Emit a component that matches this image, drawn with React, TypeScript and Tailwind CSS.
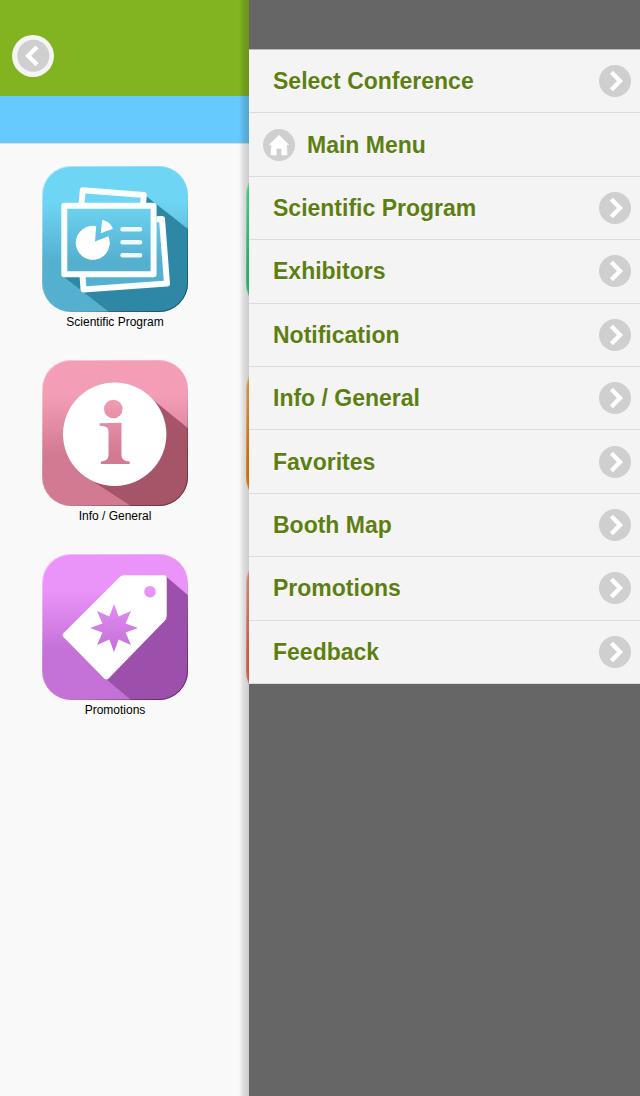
import type { ReactNode } from 'react'

interface MenuItem {
    label: string
    home?: boolean
}

const menuItems: MenuItem[] = [
    { label: 'Select Conference' },
    { label: 'Main Menu', home: true },
    { label: 'Scientific Program' },
    { label: 'Exhibitors' },
    { label: 'Notification' },
    { label: 'Info / General' },
    { label: 'Favorites' },
    { label: 'Booth Map' },
    { label: 'Promotions' },
    { label: 'Feedback' },
]

function ArrowIcon() {
    return (
        <svg viewBox="0 0 32 32" className="size-8 shrink-0" aria-hidden="true">
            <circle cx="16" cy="16" r="16" fill="#cfcfcf" />
            <path d="M12.4 7.2 21 16 12.4 24.8" fill="none" stroke="#fff" strokeWidth="4.4" />
        </svg>
    )
}

function BackIcon() {
    return (
        <svg viewBox="0 0 42 42" className="size-full" aria-hidden="true">
            <circle cx="21" cy="21" r="21" fill="#f5f5f5" />
            <circle cx="21.3" cy="20.8" r="16" fill="#cfcfcf" />
            <path d="M25 12 16.2 20.8 25 29.6" fill="none" stroke="#fff" strokeWidth="4.4" />
        </svg>
    )
}

function HomeIcon() {
    return (
        <svg viewBox="0 0 32 32" className="size-8 shrink-0" aria-hidden="true">
            <circle cx="16" cy="16" r="16" fill="#cfcfcf" />
            <path
                d="M16 6.200 25.700 15.700H23.500L24 26h-5.300v-5.500q0-1-1-1h-3.400q-1 0-1 1V26H8L8.500 15.700H6.300z"
                fill="#fff"
                stroke="#fff"
                strokeWidth="0.6"
                strokeLinejoin="round"
            />
        </svg>
    )
}

interface TileProps {
    id: string
    top: string
    bottom: string
    children?: ReactNode
}

// Rounded square with the glossy gradient, artwork is clipped to it
function Tile({ id, top, bottom, children }: TileProps) {
    return (
        <svg viewBox="0 0 146 146" className="w-full" aria-hidden="true">
            <defs>
                <linearGradient id={id} gradientUnits="userSpaceOnUse" x1="0" y1="0" x2="0" y2="146">
                    <stop offset="0" stopColor={top} />
                    <stop offset="0.24" stopColor={top} />
                    <stop offset="0.65" stopColor={bottom} />
                    <stop offset="1" stopColor={bottom} />
                </linearGradient>
                <linearGradient id={`${id}-edge`} x1="0.2" y1="0" x2="1" y2="0.9">
                    <stop offset="0" stopColor="#fff" stopOpacity="0.4" />
                    <stop offset="0.5" stopColor="#fff" stopOpacity="0.1" />
                    <stop offset="0.75" stopColor="#000" stopOpacity="0.2" />
                    <stop offset="1" stopColor="#000" stopOpacity="0.4" />
                </linearGradient>
                <clipPath id={`${id}-clip`}>
                    <rect width="146" height="146" rx="29" />
                </clipPath>
            </defs>
            <g clipPath={`url(#${id}-clip)`}>
                <rect width="146" height="146" fill={`url(#${id})`} />
                {children}
            </g>
            <rect x="0.5" y="0.5" width="145" height="145" rx="28.5" fill="none" stroke={`url(#${id}-edge)`} />
        </svg>
    )
}

function ProgramTile() {
    return (
        <Tile id="program" top="#6fd5f4" bottom="#55b0d0">
            <path d="M104 30 146 63v83H67L22 111l70-20z" fill="#2f87a6" />
            <g fill="url(#program)" stroke="#fbfeff" strokeWidth="6" strokeLinejoin="round">
                <path d="M114.5 53.3 120 53l5 64.6-83.500 5.800L40.500 109" />
                <path d="M39.3 40 40.8 24.2l61 4.8-.8 11" />
                <rect x="22.3" y="39.7" width="89.3" height="68.6" />
            </g>
            <path d="M54.2 60.2A17 17 0 1 0 66.4 70.2L53 75.4z" fill="#fff" />
            <path d="M58.7 67.2 60.2 53.800A15 15 0 0 1 71 62.700z" fill="#fff" />
            <path d="M80.5 63.3h17.500M80.5 76.3h17.500M80.5 89.3h17.500" stroke="#eefafd" strokeWidth="4.6" strokeLinecap="round" />
        </Tile>
    )
}

function InfoTile() {
    return (
        <Tile id="info" top="#f49db7" bottom="#d17a92">
            <path d="M110 39 146 68.3V146H89L52 122z" fill="#a65568" />
            <circle cx="72.7" cy="74.3" r="51.7" fill="#fff" />
            <circle cx="71.300" cy="49" r="9.300" fill="url(#info)" />
            <path
                d="M57.600 63.300 79.500 62.700V94c0 5 1.500 6.700 8.200 7.500v2.500H58.800v-2.500c6.400-.8 7.700-2.500 7.700-7.500V72c0-4.500-1.800-5.800-8.900-6.200z"
                fill="url(#info)"
            />
        </Tile>
    )
}

function PromotionsTile() {
    return (
        <Tile id="promotions" top="#ea94fa" bottom="#c572d8">
            <path d="M123.500 22 146 41.300V146H89L64 125z" fill="#9c50ab" />
            <path
                d="M82 21.300h40.500q2.200 0 2.200 2.200V62q0 2.800-2 4.800L66.600 124.400q-2.200 2.200-4.400 0L21.700 83.300q-2.200-2.200 0-4.400L77.500 23.200q1.900-1.900 4.500-1.900z"
                fill="#fff"
            />
            <circle cx="108" cy="37.700" r="5.800" fill="url(#promotions)" />
            <path
                d="M72 50 76.600 62.400 89 57 83.600 69.400 96 74 83.600 78.600 89 91 76.600 85.600 72 98 67.400 85.600 55 91 60.400 78.600 48 74 60.400 69.400 55 57 67.400 62.400z"
                fill="url(#promotions)"
            />
        </Tile>
    )
}

function Shortcut({ label, children }: { label: string; children: ReactNode }) {
    return (
        <a href="#" className="block text-center text-xs leading-5 text-black">
            {children}
            <span className="block">{label}</span>
        </a>
    )
}

export default function App() {
    return (
        <div className="flex min-h-screen bg-[#666666] font-['Liberation_Sans',Arial,sans-serif]">
            {/* Page pushed aside by the open menu */}
            <main className="relative w-[249px] shrink-0 overflow-hidden bg-[#f9f9f9]">
                <header className="flex h-24 items-center bg-[#82b321] px-3 pt-4">
                    <button type="button" aria-label="Back" className="size-[42px]">
                        <BackIcon />
                    </button>
                </header>
                <div className="h-12 border-b border-[#dddddd] bg-[#66caff]" />

                <div className="grid w-max grid-cols-[146px_146px] gap-x-[58px] gap-y-7 pt-[22px] pl-[42px]">
                    <Shortcut label="Scientific Program">
                        <ProgramTile />
                    </Shortcut>
                    <Tile id="exhibitors" top="#4df09a" bottom="#2cd47c" />
                    <Shortcut label="Info / General">
                        <InfoTile />
                    </Shortcut>
                    <Tile id="favorites" top="#ffaa4a" bottom="#ff8208" />
                    <Shortcut label="Promotions">
                        <PromotionsTile />
                    </Shortcut>
                    <Tile id="feedback" top="#ff9482" bottom="#ff6a52" />
                </div>

                {/* Shadow along the edge of the menu */}
                <div className="pointer-events-none absolute inset-y-0 right-0 w-2.5 bg-linear-to-l from-black/18 via-black/12 to-transparent" />
            </main>

            <nav className="min-w-0 flex-1 pt-[49px]">
                <ul className="grid min-h-[635px] auto-rows-fr border-t border-[#bbbbbb] bg-[#f4f4f4]">
                    {menuItems.map((item) => (
                        <li key={item.label} className="border-b border-[#dcdcdc]">
                            <a
                                href="#"
                                className={
                                    item.home
                                        ? 'flex h-full items-center gap-3 pr-[9px] pl-3.5'
                                        : 'flex h-full items-center justify-between gap-3 pr-[9px] pl-6'
                                }
                            >
                                {item.home && <HomeIcon />}
                                <span className="text-[23px] leading-7 font-bold text-[#5d7f12] [text-shadow:0_1px_0_#ffffff]">
                                    {item.label}
                                </span>
                                {!item.home && <ArrowIcon />}
                            </a>
                        </li>
                    ))}
                </ul>
            </nav>
        </div>
    )
}
